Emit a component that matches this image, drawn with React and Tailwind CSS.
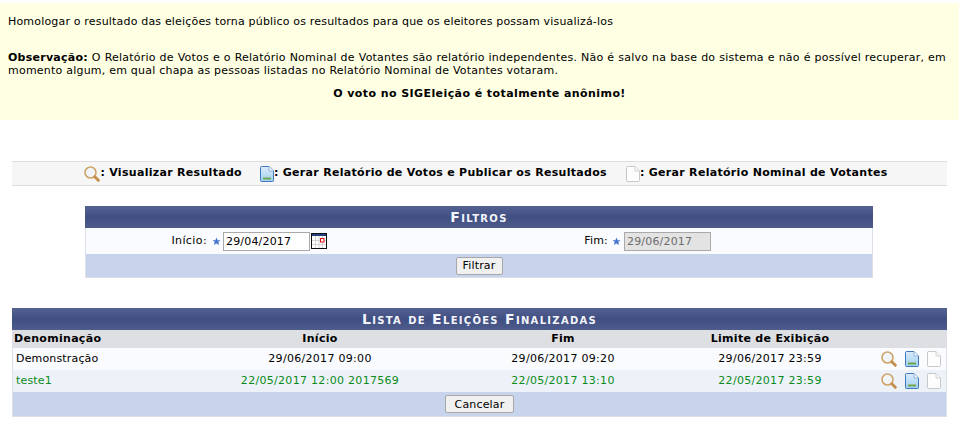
const Lupa = () => (
  <svg width="16" height="16" viewBox="0 0 16 16" className="shrink-0">
    <circle cx="6.500" cy="6.500" r="5.500" fill="#f1f5f9" stroke="#cfa468" strokeWidth="1.600" />
    <path d="M10.800 10.800L14.300 14.300" stroke="#c58f4e" strokeWidth="3" strokeLinecap="round" />
  </svg>
);

const DocAzul = () => (
  <svg width="14" height="16" viewBox="0 0 14 16" className="shrink-0">
    <defs>
      <linearGradient id="docAzulFill" x1="0" y1="0" x2="0" y2="1">
        <stop offset="0" stopColor="#dcecfa" />
        <stop offset="1" stopColor="#a0cff0" />
      </linearGradient>
    </defs>
    <path d="M.5 1.500a1 1 0 0 1 1-1h7.500l4.500 4.500v9.500a1 1 0 0 1-1 1h-11a1 1 0 0 1-1-1z" fill="url(#docAzulFill)" stroke="#3f78bd" />
    <path d="M9 .5v4.500h4.500" fill="#f3f8fd" stroke="#8db2dc" />
    <rect x="3" y="11.500" width="8" height="2" fill="#6ea84a" />
  </svg>
);

const DocBranco = () => (
  <svg width="14" height="16" viewBox="0 0 14 16" className="shrink-0">
    <path d="M.5 1.500a1 1 0 0 1 1-1h7.500l4.500 4.500v9.500a1 1 0 0 1-1 1h-11a1 1 0 0 1-1-1z" fill="#fdfdfd" stroke="#c8c8c8" />
    <path d="M9 .5v4.500h4.500" fill="#f6f6f6" stroke="#d4d4d4" />
  </svg>
);

const Calendario = () => (
  <svg width="16" height="16" viewBox="0 0 16 16" className="shrink-0">
    <rect x=".5" y=".5" width="15" height="15" fill="#fff" stroke="#111" />
    <rect x="1" y="1" width="14" height="2" fill="#24407c" />
    <path d="M4.500 3v12M8 3v12M11.500 3v12M1 7.500h14M1 11.500h14" stroke="#d4d4d4" />
    <rect x="9.500" y="5.500" width="3.500" height="3.500" fill="#fff" stroke="#e01010" />
  </svg>
);

const Estrela = () => (
  <svg width="9" height="9" viewBox="0 0 10 10" className="shrink-0">
    <path d="M5 .5l1.300 3h3.200l-2.500 2.100.9 3.400-2.900-1.900-2.900 1.900.9-3.400-2.500-2.100h3.200z" fill="#4a78d0" />
  </svg>
);

const Titulo = ({ children }) => (
  <div className="h-[22px] flex items-center justify-center bg-gradient-to-b from-[#556392] via-[#404f82] to-[#4e5c8c] text-[#f4f5fa] font-bold text-[14px] tracking-[1.3px] [font-variant:small-caps]">
    {children}
  </div>
);

const BotaoForm = ({ children, className }) => (
  <button className={`h-[18px] bg-[#f0f0f0] border border-[#a8a8a8] rounded-[2px] text-[11px] tracking-[0.16px] text-black leading-none ${className}`}>
    {children}
  </button>
);

const eleicoes = [
  {
    nome: "Demonstração",
    inicio: "29/06/2017 09:00",
    fim: "29/06/2017 09:20",
    limite: "29/06/2017 23:59",
    rowClass: "bg-[#fafbfe] text-black",
    nomeClass: "pl-[3px]",
  },
  {
    nome: "teste1",
    inicio: "22/05/2017 12:00 2017569",
    fim: "22/05/2017 13:10",
    limite: "22/05/2017 23:59",
    rowClass: "bg-[#edf2f9] text-[#0b8a1b]",
    nomeClass: "pl-[3px]",
  },
];

export default function App() {
  return (
    <div className="w-[959px] h-[428px] overflow-hidden bg-white text-[11px] tracking-[0.18px] text-black font-['DejaVu_Sans','Liberation_Sans',sans-serif] pt-[3px]">
      {/* Aviso */}
      <div className="h-[117px] bg-[#ffffe3] pl-2 pr-[13px] pt-[12px] leading-[13px]">
        <p>Homologar o resultado das eleições torna público os resultados para que os eleitores possam visualizá-los</p>
        <p className="mt-[23px] text-justify tracking-[0.22px]">
          <b className="tracking-[0.25px]">Observação:</b> O Relatório de Votos e o Relatório Nominal de Votantes são relatório independentes. Não é salvo na base do sistema e não é possível recuperar, em momento algum, em qual chapa as pessoas listadas no Relatório Nominal de Votantes votaram.
        </p>
        <p className="mt-[10px] text-center font-bold tracking-[0.42px] pl-[5px]">O voto no SIGEleição é totalmente anônimo!</p>
      </div>

      {/* Legenda */}
      <div className="mt-[41px] mx-3 h-[25px] pl-[13px] bg-[#f6f6f6] border-y border-[#dddddd] flex items-center justify-center font-bold tracking-[0.3px]">
        <Lupa />
        <span>: Visualizar Resultado</span>
        <span className="ml-[18px]"><DocAzul /></span>
        <span>: Gerar Relatório de Votos e Publicar os Resultados</span>
        <span className="ml-[19px]"><DocBranco /></span>
        <span>: Gerar Relatório Nominal de Votantes</span>
      </div>

      {/* Filtros */}
      <div className="mt-5 ml-[85px] w-[788px] border-x border-b border-[#dddfe8]">
        <div className="-mx-px"><Titulo>Filtros</Titulo></div>
        <div className="h-[26px] bg-[#fafbfe] flex items-center">
          <div className="w-[121px] text-right whitespace-nowrap tracking-[0.4px]">Início:</div>
          <span className="ml-[5px]"><Estrela /></span>
          <input readOnly value="29/04/2017" className="ml-[2px] w-[87px] h-[19px] px-[2px] bg-white border border-[#a9a9a9] text-[11px] text-black outline-none" />
          <span className="ml-px"><Calendario /></span>
          <div className="w-[281px] text-right whitespace-nowrap">Fim:</div>
          <span className="ml-[4px]"><Estrela /></span>
          <input readOnly value="29/06/2017" className="ml-[3px] w-[87px] h-[19px] px-[2px] bg-[#e3e3e3] border border-[#a9a9a9] text-[11px] text-[#6d6d6d] outline-none" />
        </div>
        <div className="h-[23px] bg-[#c8d4ec] flex items-center justify-center">
          <BotaoForm className="w-[47px]">Filtrar</BotaoForm>
        </div>
      </div>

      {/* Lista */}
      <div className="mt-[30px] mx-3 border-x border-b border-[#dddfe8]">
        <div className="-mx-px"><Titulo>Lista de Eleições Finalizadas</Titulo></div>
        <div className="h-[18px] bg-[#dedfe3] font-bold flex items-center tracking-[0.3px]">
          <div className="w-[195px] pl-px">Denominação</div>
          <div className="w-[224px] text-center">Início</div>
          <div className="w-[262px] text-center">Fim</div>
          <div className="w-[152px] text-center">Limite de Exibição</div>
        </div>
        {eleicoes.map((e) => (
          <div key={e.nome} className={`h-[22px] flex items-center ${e.rowClass}`}>
            <div className={`w-[195px] shrink-0 tracking-[0.16px] ${e.nomeClass}`}>{e.nome}</div>
            <div className="w-[224px] text-center shrink-0 tracking-[0.3px]">{e.inicio}</div>
            <div className="w-[262px] text-center shrink-0 tracking-[0.3px]">{e.fim}</div>
            <div className="w-[152px] text-center shrink-0 tracking-[0.3px]">{e.limite}</div>
            <div className="flex items-center ml-[35px] shrink-0">
              <Lupa />
              <span className="ml-2"><DocAzul /></span>
              <span className="ml-2"><DocBranco /></span>
            </div>
          </div>
        ))}
        <div className="h-[24px] bg-[#c8d4ec] flex items-center justify-center">
          <BotaoForm className="w-[69px]">Cancelar</BotaoForm>
        </div>
      </div>
    </div>
  );
}
